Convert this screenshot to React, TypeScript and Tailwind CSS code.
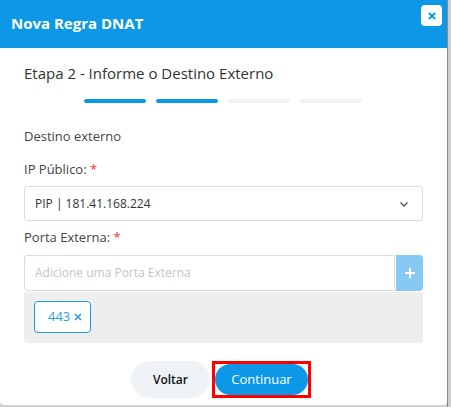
import { FC } from 'react';

const steps = [true, true, false, false];

const App: FC = () => {
  return (
    <div
      className="flex h-[407px] w-[451px] bg-[#cfcfcf]"
      style={{ fontFamily: '"Open Sans", "Liberation Sans", sans-serif' }}
    >
      <div className="flex h-[405px] w-[447px] flex-col overflow-hidden rounded-b-[4px] bg-white">
        {/* Header */}
        <div className="flex h-[48px] shrink-0 items-start justify-between bg-[#0c98e6] pl-[11px] pr-[5px]">
          <h1 className="mt-[13px] text-[15px] font-bold leading-[20px] text-white">Nova Regra DNAT</h1>
          <button className="mt-[5px] flex h-[21px] w-[21px] items-center justify-center rounded-[4px] bg-white">
            <svg width="10" height="10" viewBox="0 0 10 10" fill="none" stroke="#0c98e6" strokeWidth="2">
              <path d="M2 2l6 6M8 2l-6 6" />
            </svg>
          </button>
        </div>

        <div className="flex flex-col px-[24px]">
          <h2 className="mt-[14px] text-[15px] leading-[22px] text-[#333]">Etapa 2 - Informe o Destino Externo</h2>

          {/* Step progress */}
          <div className="mt-[15px] flex justify-center gap-[10px] pr-[1px]">
            {steps.map((done, i) => (
              <div
                key={i}
                className={`h-[4px] w-[62px] rounded-full ${done ? 'bg-[#0c98e6]' : 'bg-[#f0f2f5]'}`}
              />
            ))}
          </div>

          <p className="mt-[24px] text-[13px] leading-[18px] text-[#444]">Destino externo</p>

          <label className="mt-[15px] text-[13px] leading-[18px] text-[#444]">
            IP Público: <span className="text-[#e53935]">*</span>
          </label>

          <div className="mt-[8px] flex h-[35px] items-center justify-between rounded-[3px] border border-[#dcdcdc] pl-[10px] pr-[12px]">
            <span className="text-[12px] text-[#333]">PIP | 181.41.168.224</span>
            <svg width="12" height="12" viewBox="0 0 12 12" fill="none" stroke="#555" strokeWidth="1.3">
              <path d="M2.5 4.5l3.5 3.5 3.5-3.5" />
            </svg>
          </div>

          <label className="mt-[7px] text-[13px] leading-[18px] text-[#444]">
            Porta Externa: <span className="text-[#e53935]">*</span>
          </label>

          <div className="mt-[9px] flex h-[36px]">
            <div className="flex flex-1 items-center rounded-l-[3px] border border-[#dcdcdc] pl-[10px]">
              <span className="text-[12px] text-[#c4c4c4]">Adicione uma Porta Externa</span>
            </div>
            <button className="ml-[1px] flex w-[27px] items-center justify-center rounded-r-[4px] bg-[#86caf3]">
              <svg width="12" height="12" viewBox="0 0 12 12" fill="none" stroke="#fff" strokeWidth="2">
                <path d="M6 1v10M1 6h10" />
              </svg>
            </button>
          </div>

          <div className="mt-[1px] h-[51px] rounded-b-[4px] bg-[#eeeeee] px-[10px] pt-[9px]">
            <span className="inline-flex h-[32px] w-[57px] items-center rounded-[4px] border border-[#1e9be8] bg-white pl-[13px] text-[13px] text-[#2a9ae6]">
              443
              <svg className="ml-[4px]" width="8" height="8" viewBox="0 0 8 8" fill="none" stroke="#2a9ae6" strokeWidth="1.6">
                <path d="M1 1l6 6M7 1l-6 6" />
              </svg>
            </span>
          </div>

          {/* Footer actions */}
          <div className="mt-[18px] flex items-center justify-center gap-[2px] pr-[5px]">
            <button className="h-[37px] w-[79px] rounded-full bg-[#f0f3f6] text-[12px] font-semibold text-[#111]">
              Voltar
            </button>
            <div className="flex h-[37px] w-[99px] border-[3px] border-[#ff0000]">
              <button className="h-full w-full rounded-full bg-[#0c98e6] text-[13px] text-white">Continuar</button>
            </div>
          </div>
        </div>
      </div>
      <div className="w-[1px] bg-[#8a8a8a]" />
    </div>
  );
};

export default App;
